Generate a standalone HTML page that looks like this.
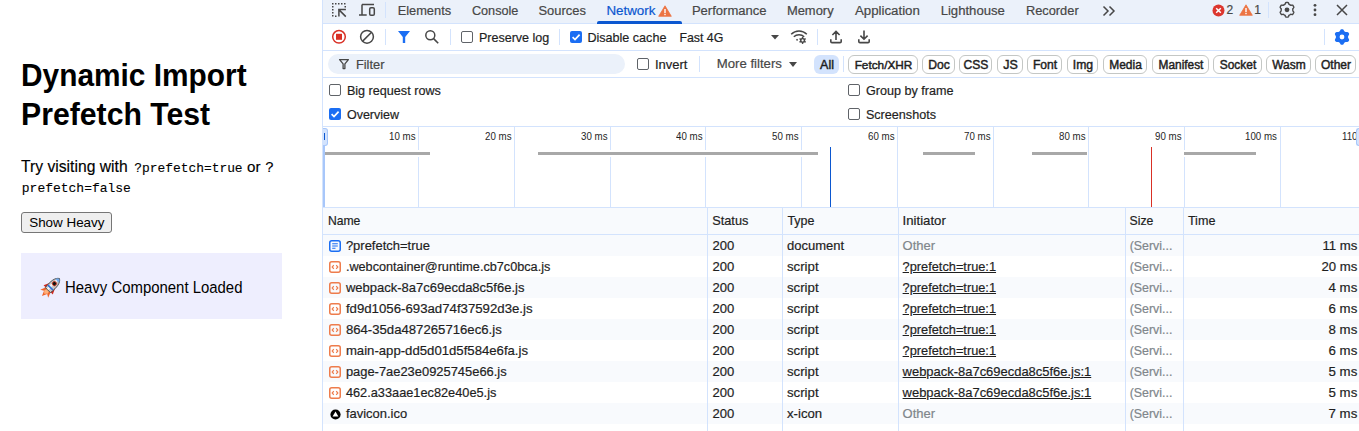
<!DOCTYPE html>
<html><head><meta charset="utf-8">
<style>
*{box-sizing:border-box;margin:0;padding:0}
html,body{width:1359px;height:431px;overflow:hidden;background:#fff;font-family:"Liberation Sans",sans-serif;color:#1f1f1f}
.a{position:absolute;white-space:nowrap}
.pt{-webkit-text-stroke:0.15px #000}
.mono{font-family:"Liberation Mono",monospace;-webkit-text-stroke:0.12px #000}
#dt{position:absolute;left:322px;top:0;width:1037px;height:431px;background:#fff;overflow:hidden}
.bar{position:absolute;left:0;width:1037px}
.sep{position:absolute;width:1px;background:#d3e3fd}
.hl{position:absolute;height:1px;background:#d3e3fd;left:0;width:1037px}
.t{position:absolute;white-space:nowrap;color:#1f1f1f;-webkit-text-stroke:0.2px currentColor}
.cb{position:absolute;width:12px;height:12px;border:1px solid #5f6368;border-radius:2px;background:#fff}
.cbc{position:absolute;width:12px;height:12px;border-radius:2px;background:#1b6ef3}
.chip{position:absolute;top:55px;height:19px;border:1px solid #c4c7c5;border-radius:6px}
.gl{position:absolute;width:1px;background:#d3e3fd}
.lbl{position:absolute;white-space:nowrap;color:#1f1f1f;line-height:12px}
.gbar{position:absolute;top:152px;height:3px;background:#a8a8a8;box-shadow:0 2px 0 #fff,0 -2px 0 #fff}
.row{position:absolute;left:1px;width:1036px;height:21px}
.odd{background:#f8fafd}
.c{position:absolute;white-space:nowrap;color:#1f1f1f;-webkit-text-stroke:0.2px currentColor}
.g{color:#80868b}
.u{text-decoration:underline}
</style></head><body>
<div id="page">
<div class="a" style="left:21.3px;top:53.82px;font-size:32.27px;line-height:42px;transform:scaleX(0.9251);transform-origin:0 0;color:#000;font-weight:bold">Dynamic Import</div>
<div class="a" style="left:21.3px;top:92.72px;font-size:32.27px;line-height:42px;transform:scaleX(0.9363);transform-origin:0 0;color:#000;font-weight:bold">Prefetch Test</div>
<div class="a pt" style="left:20.8px;top:155.66px;font-size:16.28px;line-height:21px;transform:scaleX(0.9643);transform-origin:0 0;color:#000">Try visiting with</div>
<div class="a mono" style="left:134.2px;top:160.76px;font-size:12.92px;line-height:16px;color:#000">?prefetch=true</div>
<div class="a pt" style="left:247px;top:158.94px;font-size:15.18px;line-height:16px;color:#000">or</div>
<div class="a mono" style="left:265.2px;top:160.34px;font-size:14.49px;line-height:16px;color:#000">?</div>
<div class="a mono" style="left:21.8px;top:180.84px;font-size:12.99px;line-height:16px;color:#000">prefetch=false</div>
<div class="a" style="left:21px;top:212px;width:91px;height:21px;border:1px solid #767676;border-radius:3px;background:#efefef"></div>
<div class="a" style="left:29.2px;top:214.85px;font-size:13.41px;line-height:16px;color:#000">Show Heavy</div>
<div class="a" style="left:21px;top:253px;width:261px;height:66px;background:#eeeefe"></div>
<svg class="a" style="left:40px;top:276px" width="22" height="22" viewBox="0 0 22 22"><g transform="translate(11 11) rotate(45) scale(0.8) translate(-7 -15)">
<path d="M3.2 19 L0 27 L4.2 24.5 L7 31 L9.8 24.5 L14 27 L10.8 19 Z" fill="#f0642a"/><path d="M5 19.5 L4 24 L7 27 L10 24 L9 19.5 Z" fill="#ffb07a"/>
<path d="M3.2 10.5 L-1.2 20 L3.4 20 Z" fill="#d0281e"/><path d="M10.8 10.5 L15.2 20 L10.6 20 Z" fill="#d0281e"/>
<path d="M7 0 C11.8 3 12.8 10 11.5 20.5 L2.5 20.5 C1.2 10 2.2 3 7 0 Z" fill="#c8c8c8" stroke="#3a3a3a" stroke-width="1"/><path d="M6 2 C4.5 5 4.3 12 4.8 20 L7.5 20 C7.2 12 7.2 5 7.6 1.2 Z" fill="#f2f2f2"/>
<path d="M7 0.5 C8.8 1.6 9.8 2.8 10.3 4 L3.7 4 C4.2 2.8 5.2 1.6 7 0.5 Z" fill="#6fa9ee"/>
<circle cx="7" cy="9" r="2.7" fill="#111" stroke="#e2472b" stroke-width="1.1"/>
<rect x="2.6" y="15" width="8.8" height="2" fill="#2b6fdc"/>
</g></svg>
<div class="a" style="left:64.6px;top:276.66px;font-size:16.86px;line-height:22px;transform:scaleX(0.8846);transform-origin:0 0;color:#000">Heavy Component Loaded</div>
</div>
<div id="dt">
<div class="bar" style="top:0;height:23px;background:#ebf1fa"></div>
<div class="hl" style="top:23px"></div>
<div class="hl" style="top:50px"></div>
<div class="hl" style="top:77px"></div>
<div class="hl" style="top:126px"></div>
<div class="hl" style="top:207px"></div>
<div class="hl" style="top:234px"></div>
<div class="sep" style="left:0;top:0;height:431px"></div>
<svg class="a" style="left:9px;top:2px" width="17" height="17" viewBox="0 0 17 17">
<g fill="#474747">
<rect x="1" y="1" width="1.5" height="1.5"/><rect x="4" y="1" width="1.5" height="1.5"/><rect x="7" y="1" width="1.5" height="1.5"/><rect x="10" y="1" width="1.5" height="1.5"/><rect x="13" y="1" width="1.5" height="1.5"/>
<rect x="1" y="4" width="1.5" height="1.5"/><rect x="1" y="7" width="1.5" height="1.5"/><rect x="1" y="10" width="1.5" height="1.5"/><rect x="1" y="13" width="1.5" height="1.5"/>
<rect x="4" y="13.5" width="1.5" height="1.5"/><rect x="13.5" y="4" width="1.5" height="1.5"/>
</g>
<path d="M8.3 8.1 L14.8 14.6 M7.9 6.9 V14.6 M7.1 7.6 H14.9" stroke="#474747" stroke-width="1.5" fill="none"/>
</svg>
<svg class="a" style="left:36px;top:3px" width="18" height="15" viewBox="0 0 18 15">
<path d="M4 1.5 H16 M4 1.5 V12 M1 12 H8.7" stroke="#474747" stroke-width="1.5" fill="none"/>
<rect x="11.7" y="4.8" width="4.6" height="7.4" rx="1.3" stroke="#474747" stroke-width="1.5" fill="none"/>
</svg>
<div class="sep" style="left:63px;top:2px;height:16px"></div>
<div class="t" style="left:75.65px;top:3.25px;font-size:12.83px;line-height:16px;color:#474747">Elements</div>
<div class="t" style="left:149.9px;top:3.31px;font-size:12.68px;line-height:16px;color:#474747">Console</div>
<div class="t" style="left:216.4px;top:3.21px;font-size:12.95px;line-height:16px;color:#474747">Sources</div>
<div class="t" style="left:284.4px;top:3.07px;font-size:13.36px;line-height:16px;color:#0b57d0">Network</div>
<div class="t" style="left:369.9px;top:3.17px;font-size:13.06px;line-height:16px;color:#474747">Performance</div>
<div class="t" style="left:464.9px;top:3.22px;font-size:12.94px;line-height:16px;color:#474747">Memory</div>
<div class="t" style="left:532.9px;top:3.1px;font-size:13.29px;line-height:16px;color:#474747">Application</div>
<div class="t" style="left:618.65px;top:3.15px;font-size:13.13px;line-height:16px;color:#474747">Lighthouse</div>
<div class="t" style="left:703.9px;top:3.25px;font-size:12.83px;line-height:16px;color:#474747">Recorder</div>
<svg class="a" style="left:336px;top:5px" width="14" height="12" viewBox="0 0 14 12"><path d="M7 0.8 L13.3 11.3 H0.7 Z" fill="#ec7443" stroke="#ec7443" stroke-width="0.8" stroke-linejoin="round"/><rect x="6.3" y="4" width="1.4" height="4" fill="#fff"/><rect x="6.3" y="8.8" width="1.4" height="1.4" fill="#fff"/></svg>
<div class="a" style="left:275px;top:21px;width:85px;height:3px;background:#0b57d0;border-radius:2px 2px 0 0"></div>
<svg class="a" style="left:779px;top:5px" width="16" height="12" viewBox="0 0 16 12"><path d="M2.5 1.5 L7 6 L2.5 10.5 M8.5 1.5 L13 6 L8.5 10.5" stroke="#474747" stroke-width="1.5" fill="none"/></svg>
<svg class="a" style="left:889.5px;top:4px" width="13" height="13" viewBox="0 0 13 13"><circle cx="6.5" cy="6.5" r="6" fill="#dc362e"/><path d="M4.2 4.2 L8.8 8.8 M8.8 4.2 L4.2 8.8" stroke="#fff" stroke-width="1.5"/></svg>
<div class="t" style="left:904.5px;top:1.94px;font-size:12px;line-height:16px;color:#474747">2</div>
<svg class="a" style="left:917px;top:4px" width="14" height="12" viewBox="0 0 14 12"><path d="M7 0.8 L13.3 11.3 H0.7 Z" fill="#ec7443" stroke="#ec7443" stroke-width="0.8" stroke-linejoin="round"/><rect x="6.3" y="4" width="1.4" height="4" fill="#fff"/><rect x="6.3" y="8.8" width="1.4" height="1.4" fill="#fff"/></svg>
<div class="t" style="left:932.2px;top:1.94px;font-size:12px;line-height:16px;color:#474747">1</div>
<div class="sep" style="left:946px;top:2px;height:16px"></div>
<svg class="a" style="left:956px;top:1px" width="18" height="18" viewBox="0 0 18 18"><path d="M9.00 1.50 L9.25 1.50 L9.51 1.52 L9.76 1.54 L10.02 1.57 L10.26 1.65 L10.45 1.96 L10.62 2.30 L10.76 2.65 L10.89 2.99 L11.00 3.31 L11.17 3.42 L11.36 3.50 L11.54 3.59 L11.72 3.68 L11.90 3.78 L12.07 3.88 L12.24 3.99 L12.41 4.11 L12.57 4.23 L12.75 4.33 L13.09 4.26 L13.45 4.20 L13.82 4.15 L14.19 4.12 L14.56 4.13 L14.75 4.31 L14.91 4.51 L15.05 4.72 L15.19 4.93 L15.32 5.15 L15.45 5.37 L15.56 5.60 L15.67 5.83 L15.77 6.07 L15.82 6.32 L15.65 6.64 L15.44 6.95 L15.21 7.25 L14.98 7.53 L14.75 7.79 L14.74 7.99 L14.77 8.19 L14.79 8.40 L14.80 8.60 L14.80 8.80 L14.80 9.00 L14.79 9.20 L14.77 9.41 L14.74 9.61 L14.75 9.81 L14.98 10.07 L15.21 10.35 L15.44 10.65 L15.65 10.96 L15.82 11.28 L15.77 11.53 L15.67 11.77 L15.56 12.00 L15.45 12.23 L15.32 12.45 L15.19 12.67 L15.05 12.88 L14.91 13.09 L14.75 13.29 L14.56 13.47 L14.19 13.48 L13.82 13.45 L13.45 13.40 L13.09 13.34 L12.75 13.27 L12.57 13.37 L12.41 13.49 L12.24 13.61 L12.07 13.72 L11.90 13.82 L11.72 13.92 L11.54 14.01 L11.36 14.10 L11.17 14.18 L11.00 14.29 L10.89 14.61 L10.76 14.95 L10.62 15.30 L10.45 15.64 L10.26 15.95 L10.02 16.03 L9.76 16.06 L9.51 16.08 L9.25 16.10 L9.00 16.10 L8.75 16.10 L8.49 16.08 L8.24 16.06 L7.98 16.03 L7.74 15.95 L7.55 15.64 L7.38 15.30 L7.24 14.95 L7.11 14.61 L7.00 14.29 L6.83 14.18 L6.64 14.10 L6.46 14.01 L6.28 13.92 L6.10 13.82 L5.93 13.72 L5.76 13.61 L5.59 13.49 L5.43 13.37 L5.25 13.27 L4.91 13.34 L4.55 13.40 L4.18 13.45 L3.81 13.48 L3.44 13.47 L3.25 13.29 L3.09 13.09 L2.95 12.88 L2.81 12.67 L2.68 12.45 L2.55 12.23 L2.44 12.00 L2.33 11.77 L2.23 11.53 L2.18 11.28 L2.35 10.96 L2.56 10.65 L2.79 10.35 L3.02 10.07 L3.25 9.81 L3.26 9.61 L3.23 9.41 L3.21 9.20 L3.20 9.00 L3.20 8.80 L3.20 8.60 L3.21 8.40 L3.23 8.19 L3.26 7.99 L3.25 7.79 L3.02 7.53 L2.79 7.25 L2.56 6.95 L2.35 6.64 L2.18 6.32 L2.23 6.07 L2.33 5.83 L2.44 5.60 L2.55 5.37 L2.68 5.15 L2.81 4.93 L2.95 4.72 L3.09 4.51 L3.25 4.31 L3.44 4.13 L3.81 4.12 L4.18 4.15 L4.55 4.20 L4.91 4.26 L5.25 4.33 L5.43 4.23 L5.59 4.11 L5.76 3.99 L5.93 3.88 L6.10 3.78 L6.28 3.68 L6.46 3.59 L6.64 3.50 L6.83 3.42 L7.00 3.31 L7.11 2.99 L7.24 2.65 L7.38 2.30 L7.55 1.96 L7.74 1.65 L7.98 1.57 L8.24 1.54 L8.49 1.52 L8.75 1.50 Z" stroke="#474747" stroke-width="1.4" fill="none" stroke-linejoin="round"/><circle cx="9" cy="8.8" r="2.4" fill="#474747"/></svg>
<svg class="a" style="left:990px;top:3px" width="6" height="14" viewBox="0 0 6 14"><circle cx="3" cy="2.3" r="1.4" fill="#474747"/><circle cx="3" cy="7" r="1.4" fill="#474747"/><circle cx="3" cy="11.7" r="1.4" fill="#474747"/></svg>
<svg class="a" style="left:1013px;top:3.3px" width="14" height="14" viewBox="0 0 14 14"><path d="M2 2 L12 12 M12 2 L2 12" stroke="#474747" stroke-width="1.5"/></svg>
<svg class="a" style="left:9px;top:29px" width="16" height="16" viewBox="0 0 16 16"><circle cx="8" cy="7.8" r="6.3" stroke="#d93025" stroke-width="1.5" fill="none"/><rect x="5" y="4.8" width="6" height="6" fill="#d93025"/></svg>
<svg class="a" style="left:37px;top:29px" width="16" height="16" viewBox="0 0 16 16"><circle cx="8" cy="7.8" r="6.4" stroke="#474747" stroke-width="1.5" fill="none"/><path d="M12.3 3.5 L3.7 12.1" stroke="#474747" stroke-width="1.5"/></svg>
<div class="sep" style="left:63px;top:29px;height:16px"></div>
<svg class="a" style="left:75px;top:30px" width="14" height="14" viewBox="0 0 14 14"><path d="M1 1 H13 L8.2 7 V13 H5.8 V7 Z" fill="#1b6ef3"/></svg>
<svg class="a" style="left:102px;top:29px" width="16" height="16" viewBox="0 0 16 16"><circle cx="6.3" cy="6.3" r="4.5" stroke="#474747" stroke-width="1.5" fill="none"/><path d="M9.6 9.6 L14.2 14.2" stroke="#474747" stroke-width="1.6"/></svg>
<div class="sep" style="left:128px;top:29px;height:16px"></div>
<div class="cb" style="left:139px;top:31px"></div>
<div class="t" style="left:156.9px;top:29.75px;font-size:12.56px;line-height:16px">Preserve log</div>
<div class="sep" style="left:237px;top:29px;height:16px"></div>
<div class="cbc" style="left:248px;top:31px"><svg width="12" height="12" viewBox="0 0 12 12" style="position:absolute;left:0;top:0"><path d="M2.6 6.2 L5 8.5 L9.6 3.6" stroke="#fff" stroke-width="1.7" fill="none"/></svg></div>
<div class="t" style="left:265.4px;top:29.74px;font-size:12.58px;line-height:16px">Disable cache</div>
<div class="t" style="left:357.4px;top:29.81px;font-size:12.37px;line-height:16px">Fast 4G</div>
<svg class="a" style="left:448px;top:34px" width="10" height="6" viewBox="0 0 10 6"><path d="M1 1 H9 L5 5.5 Z" fill="#474747"/></svg>
<svg class="a" style="left:468px;top:29px" width="18" height="16" viewBox="0 0 18 16"><path d="M1.2 5.2 C5.5 0.8 12.5 0.8 16.8 5.2" stroke="#474747" stroke-width="1.5" fill="none"/><path d="M3.8 7.8 C6.6 5.2 11.4 5.2 14.2 7.8" stroke="#474747" stroke-width="1.5" fill="none"/><path d="M6.5 10.3 L7.6 11.4" stroke="#474747" stroke-width="1.5"/><path fill-rule="evenodd" fill="#474747" d="M12.60 7.80 L12.91 7.81 L13.21 7.96 L13.39 8.45 L13.49 8.95 L13.66 9.13 L13.85 9.23 L14.03 9.35 L14.28 9.40 L14.76 9.24 L15.27 9.16 L15.55 9.34 L15.72 9.60 L15.86 9.88 L15.88 10.21 L15.55 10.61 L15.17 10.95 L15.09 11.18 L15.10 11.40 L15.09 11.62 L15.17 11.85 L15.55 12.19 L15.88 12.59 L15.86 12.92 L15.72 13.20 L15.55 13.46 L15.27 13.64 L14.76 13.56 L14.28 13.40 L14.03 13.45 L13.85 13.57 L13.66 13.67 L13.49 13.85 L13.39 14.35 L13.21 14.84 L12.91 14.99 L12.60 15.00 L12.29 14.99 L11.99 14.84 L11.81 14.35 L11.71 13.85 L11.54 13.67 L11.35 13.57 L11.17 13.45 L10.92 13.40 L10.44 13.56 L9.93 13.64 L9.65 13.46 L9.48 13.20 L9.34 12.92 L9.32 12.59 L9.65 12.19 L10.03 11.85 L10.11 11.62 L10.10 11.40 L10.11 11.18 L10.03 10.95 L9.65 10.61 L9.32 10.21 L9.34 9.88 L9.48 9.60 L9.65 9.34 L9.93 9.16 L10.44 9.24 L10.92 9.40 L11.17 9.35 L11.35 9.23 L11.54 9.13 L11.71 8.95 L11.81 8.45 L11.99 7.96 L12.29 7.81 Z M11.50 11.40 a1.1 1.1 0 1 1 2.2 0 a1.1 1.1 0 1 1 -2.2 0 Z"/></svg>
<div class="sep" style="left:495px;top:29px;height:16px"></div>
<svg class="a" style="left:507px;top:30px" width="14" height="14" viewBox="0 0 14 14"><path d="M7 10 V1.5 M3.4 5 L7 1.4 L10.6 5 M1.8 9.3 V11.4 Q1.8 12.6 3 12.6 H11 Q12.2 12.6 12.2 11.4 V9.3" stroke="#474747" stroke-width="1.6" fill="none"/></svg>
<svg class="a" style="left:535px;top:30px" width="14" height="14" viewBox="0 0 14 14"><path d="M7 0.5 V9 M3.4 5.6 L7 9.2 L10.6 5.6 M1.8 9.3 V11.4 Q1.8 12.6 3 12.6 H11 Q12.2 12.6 12.2 11.4 V9.3" stroke="#474747" stroke-width="1.6" fill="none"/></svg>
<div class="sep" style="left:1002px;top:29px;height:16px"></div>
<svg class="a" style="left:1011px;top:28px" width="18" height="18" viewBox="0 0 18 18"><path fill-rule="evenodd" d="M9.00 1.20 L9.27 1.20 L9.54 1.22 L9.82 1.24 L10.07 1.39 L10.30 1.61 L10.52 1.87 L10.71 2.14 L10.88 2.43 L11.04 2.71 L11.19 2.99 L11.33 3.24 L11.48 3.43 L11.67 3.52 L11.86 3.61 L12.05 3.72 L12.23 3.83 L12.41 3.94 L12.59 4.06 L12.82 4.11 L13.11 4.10 L13.42 4.09 L13.75 4.08 L14.08 4.09 L14.42 4.12 L14.75 4.18 L15.06 4.27 L15.31 4.42 L15.47 4.64 L15.61 4.87 L15.75 5.10 L15.89 5.34 L16.01 5.58 L16.13 5.83 L16.13 6.12 L16.05 6.43 L15.93 6.75 L15.79 7.05 L15.63 7.35 L15.46 7.63 L15.30 7.89 L15.15 8.14 L15.07 8.36 L15.09 8.57 L15.10 8.79 L15.10 9.00 L15.10 9.21 L15.09 9.43 L15.07 9.64 L15.15 9.86 L15.30 10.11 L15.46 10.37 L15.63 10.65 L15.79 10.95 L15.93 11.25 L16.05 11.57 L16.13 11.88 L16.13 12.17 L16.01 12.42 L15.89 12.66 L15.75 12.90 L15.61 13.13 L15.47 13.36 L15.31 13.58 L15.06 13.73 L14.75 13.82 L14.42 13.88 L14.08 13.91 L13.75 13.92 L13.42 13.91 L13.11 13.90 L12.82 13.89 L12.59 13.94 L12.41 14.06 L12.23 14.17 L12.05 14.28 L11.86 14.39 L11.67 14.48 L11.48 14.57 L11.33 14.76 L11.19 15.01 L11.04 15.29 L10.88 15.57 L10.71 15.86 L10.52 16.13 L10.30 16.39 L10.07 16.61 L9.82 16.76 L9.54 16.78 L9.27 16.80 L9.00 16.80 L8.73 16.80 L8.46 16.78 L8.18 16.76 L7.93 16.61 L7.70 16.39 L7.48 16.13 L7.29 15.86 L7.12 15.57 L6.96 15.29 L6.81 15.01 L6.67 14.76 L6.52 14.57 L6.33 14.48 L6.14 14.39 L5.95 14.28 L5.77 14.17 L5.59 14.06 L5.41 13.94 L5.18 13.89 L4.89 13.90 L4.58 13.91 L4.25 13.92 L3.92 13.91 L3.58 13.88 L3.25 13.82 L2.94 13.73 L2.69 13.58 L2.53 13.36 L2.39 13.13 L2.25 12.90 L2.11 12.66 L1.99 12.42 L1.87 12.17 L1.87 11.88 L1.95 11.57 L2.07 11.25 L2.21 10.95 L2.37 10.65 L2.54 10.37 L2.70 10.11 L2.85 9.86 L2.93 9.64 L2.91 9.43 L2.90 9.21 L2.90 9.00 L2.90 8.79 L2.91 8.57 L2.93 8.36 L2.85 8.14 L2.70 7.89 L2.54 7.63 L2.37 7.35 L2.21 7.05 L2.07 6.75 L1.95 6.43 L1.87 6.12 L1.87 5.83 L1.99 5.58 L2.11 5.34 L2.25 5.10 L2.39 4.87 L2.53 4.64 L2.69 4.42 L2.94 4.27 L3.25 4.18 L3.58 4.12 L3.92 4.09 L4.25 4.08 L4.58 4.09 L4.89 4.10 L5.18 4.11 L5.41 4.06 L5.59 3.94 L5.77 3.83 L5.95 3.72 L6.14 3.61 L6.33 3.52 L6.52 3.43 L6.67 3.24 L6.81 2.99 L6.96 2.71 L7.12 2.43 L7.29 2.14 L7.48 1.87 L7.70 1.61 L7.93 1.39 L8.18 1.24 L8.46 1.22 L8.73 1.20 Z M6.60 9.00 a2.4 2.4 0 1 1 4.8 0 a2.4 2.4 0 1 1 -4.8 0 Z" fill="#1b6ef3"/></svg>
<div class="a" style="left:6px;top:54px;width:297px;height:20px;border-radius:10px;background:#ebf1fa"></div>
<svg class="a" style="left:16px;top:58px" width="12" height="12" viewBox="0 0 12 12"><path d="M1.6 1.6 H10.4 L6.9 5.9 V10.6 H5.1 V5.9 Z" stroke="#474747" stroke-width="1.3" fill="none" stroke-linejoin="round"/></svg>
<div class="t" style="left:33.9px;top:56.55px;font-size:12.83px;line-height:16px;color:#474747">Filter</div>
<div class="cb" style="left:315px;top:58px"></div>
<div class="t" style="left:332.9px;top:56.5px;font-size:12.99px;line-height:16px">Invert</div>
<div class="sep" style="left:377px;top:56px;height:16px"></div>
<div class="t" style="left:394.7px;top:56.43px;font-size:13.2px;line-height:16px;color:#474747">More filters</div>
<svg class="a" style="left:466px;top:61px" width="10" height="7" viewBox="0 0 10 7"><path d="M1 1 H9 L5 6 Z" fill="#474747"/></svg>
<div class="a" style="left:492px;top:55px;width:25px;height:19px;border-radius:6px;background:#d3e3fd"></div>
<div class="t" style="left:498.05px;top:56.87px;font-size:12.5px;line-height:16px;color:#1f1f1f;-webkit-text-stroke:0.45px #1f1f1f">All</div>
<div class="sep" style="left:521px;top:56px;height:16px"></div>
<div class="chip" style="left:526px;width:70px"></div>
<div class="t" style="left:532.64px;top:57.11px;font-size:11.8px;line-height:16px;color:#1f1f1f;-webkit-text-stroke:0.45px #1f1f1f">Fetch/XHR</div>
<div class="chip" style="left:600px;width:33px"></div>
<div class="t" style="left:606.19px;top:56.99px;font-size:12.16px;line-height:16px;color:#1f1f1f;-webkit-text-stroke:0.45px #1f1f1f">Doc</div>
<div class="chip" style="left:637px;width:33px"></div>
<div class="t" style="left:641.57px;top:57.01px;font-size:12.09px;line-height:16px;color:#1f1f1f;-webkit-text-stroke:0.45px #1f1f1f">CSS</div>
<div class="chip" style="left:675px;width:26px"></div>
<div class="t" style="left:681.23px;top:56.88px;font-size:12.46px;line-height:16px;color:#1f1f1f;-webkit-text-stroke:0.45px #1f1f1f">JS</div>
<div class="chip" style="left:705px;width:35px"></div>
<div class="t" style="left:710.9px;top:57.01px;font-size:12.1px;line-height:16px;color:#1f1f1f;-webkit-text-stroke:0.45px #1f1f1f">Font</div>
<div class="chip" style="left:745px;width:31px"></div>
<div class="t" style="left:750.83px;top:56.97px;font-size:12.2px;line-height:16px;color:#1f1f1f;-webkit-text-stroke:0.45px #1f1f1f">Img</div>
<div class="chip" style="left:781px;width:44px"></div>
<div class="t" style="left:787.2px;top:57.05px;font-size:11.97px;line-height:16px;color:#1f1f1f;-webkit-text-stroke:0.45px #1f1f1f">Media</div>
<div class="chip" style="left:830px;width:57px"></div>
<div class="t" style="left:836.58px;top:57.09px;font-size:11.86px;line-height:16px;color:#1f1f1f;-webkit-text-stroke:0.45px #1f1f1f">Manifest</div>
<div class="chip" style="left:891px;width:49px"></div>
<div class="t" style="left:897.77px;top:57.07px;font-size:11.93px;line-height:16px;color:#1f1f1f;-webkit-text-stroke:0.45px #1f1f1f">Socket</div>
<div class="chip" style="left:944px;width:45px"></div>
<div class="t" style="left:950.28px;top:57.06px;font-size:11.96px;line-height:16px;color:#1f1f1f;-webkit-text-stroke:0.45px #1f1f1f">Wasm</div>
<div class="chip" style="left:993px;width:41px"></div>
<div class="t" style="left:998.99px;top:57.04px;font-size:12.0px;line-height:16px;color:#1f1f1f;-webkit-text-stroke:0.45px #1f1f1f">Other</div>
<div class="cb" style="left:7px;top:84px"></div>
<div class="t" style="left:24.9px;top:82.93px;font-size:12.61px;line-height:16px">Big request rows</div>
<div class="cbc" style="left:7px;top:108px"><svg width="12" height="12" viewBox="0 0 12 12" style="position:absolute;left:0;top:0"><path d="M2.6 6.2 L5 8.5 L9.6 3.6" stroke="#fff" stroke-width="1.7" fill="none"/></svg></div>
<div class="t" style="left:24.9px;top:107.05px;font-size:12.54px;line-height:16px">Overview</div>
<div class="cb" style="left:526px;top:84px"></div>
<div class="t" style="left:543.9px;top:82.93px;font-size:12.61px;line-height:16px">Group by frame</div>
<div class="cb" style="left:526px;top:108px"></div>
<div class="t" style="left:543.9px;top:107.03px;font-size:12.61px;line-height:16px">Screenshots</div>
<div class="gl" style="left:96px;top:127px;height:80px"></div>
<div class="lbl" style="left:66.87px;top:130.28px;font-size:10.17px;line-height:13px;transform:scaleX(0.9578);transform-origin:0 0">10 ms</div>
<div class="gl" style="left:192px;top:127px;height:80px"></div>
<div class="lbl" style="left:162.87px;top:130.28px;font-size:10.17px;line-height:13px;transform:scaleX(0.9578);transform-origin:0 0">20 ms</div>
<div class="gl" style="left:288px;top:127px;height:80px"></div>
<div class="lbl" style="left:258.87px;top:130.28px;font-size:10.17px;line-height:13px;transform:scaleX(0.9578);transform-origin:0 0">30 ms</div>
<div class="gl" style="left:383px;top:127px;height:80px"></div>
<div class="lbl" style="left:353.87px;top:130.28px;font-size:10.17px;line-height:13px;transform:scaleX(0.9578);transform-origin:0 0">40 ms</div>
<div class="gl" style="left:479px;top:127px;height:80px"></div>
<div class="lbl" style="left:449.87px;top:130.28px;font-size:10.17px;line-height:13px;transform:scaleX(0.9578);transform-origin:0 0">50 ms</div>
<div class="gl" style="left:575px;top:127px;height:80px"></div>
<div class="lbl" style="left:545.87px;top:130.28px;font-size:10.17px;line-height:13px;transform:scaleX(0.9578);transform-origin:0 0">60 ms</div>
<div class="gl" style="left:671px;top:127px;height:80px"></div>
<div class="lbl" style="left:641.87px;top:130.28px;font-size:10.17px;line-height:13px;transform:scaleX(0.9578);transform-origin:0 0">70 ms</div>
<div class="gl" style="left:766px;top:127px;height:80px"></div>
<div class="lbl" style="left:736.87px;top:130.28px;font-size:10.17px;line-height:13px;transform:scaleX(0.9578);transform-origin:0 0">80 ms</div>
<div class="gl" style="left:862px;top:127px;height:80px"></div>
<div class="lbl" style="left:832.87px;top:130.28px;font-size:10.17px;line-height:13px;transform:scaleX(0.9578);transform-origin:0 0">90 ms</div>
<div class="gl" style="left:958px;top:127px;height:80px"></div>
<div class="lbl" style="left:923.46px;top:130.28px;font-size:10.17px;line-height:13px;transform:scaleX(0.9578);transform-origin:0 0">100 ms</div>
<div class="lbl" style="left:1020.18px;top:130.28px;font-size:10.17px;line-height:13px;transform:scaleX(0.9578);transform-origin:0 0">110 ms</div>
<div class="gbar" style="left:2.8px;width:105.2px"></div>
<div class="gbar" style="left:215.75px;width:279.9px"></div>
<div class="gbar" style="left:600.7px;width:52.5px"></div>
<div class="gbar" style="left:710.4px;width:54.4px"></div>
<div class="gbar" style="left:862.4px;width:71.6px"></div>
<div class="a" style="left:508px;top:147px;width:1px;height:60px;background:#0b57d0"></div>
<div class="a" style="left:829px;top:147px;width:1px;height:60px;background:#d93025"></div>
<div class="a" style="left:1px;top:145px;width:2px;height:62px;background:#a8c7fa"></div>
<div class="a" style="left:0.5px;top:127.5px;width:5.5px;height:18px;border:1px solid #a8c7fa;border-left:none;border-radius:0 3px 3px 0;background:#d3e3fd"></div>
<div class="a" style="left:2px;top:133px;width:1px;height:7px;background:#0b57d0"></div>
<div class="a" style="left:1034px;top:127.5px;width:5px;height:18px;border:1px solid #a8c7fa;border-right:none;border-radius:3px 0 0 3px;background:#d3e3fd"></div>
<div class="a" style="left:1px;top:208px;width:1036px;height:26px;background:#f8fafd"></div>
<div class="hl" style="top:234px"></div>
<div class="t" style="left:5.9px;top:212.98px;font-size:12.18px;line-height:16px">Name</div>
<div class="t" style="left:390.2px;top:212.78px;font-size:12.77px;line-height:16px">Status</div>
<div class="t" style="left:465.4px;top:212.88px;font-size:12.46px;line-height:16px">Type</div>
<div class="t" style="left:580.6px;top:212.63px;font-size:13.2px;line-height:16px">Initiator</div>
<div class="t" style="left:807.6px;top:212.96px;font-size:12.23px;line-height:16px">Size</div>
<div class="t" style="left:865.9px;top:212.84px;font-size:12.59px;line-height:16px">Time</div>
<div class="row odd" style="top:235px">
<svg class="a" style="left:6px;top:5px" width="12" height="12" viewBox="0 0 12 12"><rect x="0.75" y="0.75" width="10.5" height="10.5" rx="2" stroke="#1b6ef3" stroke-width="1.5" fill="none"/><path d="M3.2 3.8 H8.8 M3.2 6 H8.8 M3.2 8.2 H6.5" stroke="#1b6ef3" stroke-width="1.1"/></svg>
<div class="c" style="left:22.9px;top:2.81px;font-size:12.97px;line-height:16px">?prefetch=true</div>
<div class="c" style="left:389.4px;top:2.77px;font-size:13.07px;line-height:16px">200</div>
<div class="c" style="left:464.0px;top:2.79px;font-size:13.03px;line-height:16px">document</div>
<div class="c g" style="left:579.6px;top:2.8px;font-size:12.99px;line-height:16px">Other</div>
<div class="c g" style="left:806.7px;top:3.01px;font-size:12.39px;line-height:16px">(Servi...</div>
<div class="c" style="left:999.39px;top:2.73px;font-size:13.18px;line-height:16px">11 ms</div>
</div>
<div class="row" style="top:256px">
<svg class="a" style="left:6px;top:5px" width="12" height="12" viewBox="0 0 12 12"><rect x="0.75" y="0.75" width="10.5" height="10.5" rx="2" stroke="#ee7c4c" stroke-width="1.5" fill="none"/><path d="M4.8 4.2 L3.2 6 L4.8 7.8 M7.2 4.2 L8.8 6 L7.2 7.8" stroke="#ee7c4c" stroke-width="1.2" fill="none"/></svg>
<div class="c" style="left:22.9px;top:2.91px;font-size:12.68px;line-height:16px">.webcontainer@runtime.cb7c0bca.js</div>
<div class="c" style="left:389.4px;top:2.77px;font-size:13.07px;line-height:16px">200</div>
<div class="c" style="left:464.0px;top:2.72px;font-size:13.22px;line-height:16px">script</div>
<div class="c u" style="left:579.6px;top:2.87px;font-size:12.79px;line-height:16px">?prefetch=true:1</div>
<div class="c g" style="left:806.7px;top:3.01px;font-size:12.39px;line-height:16px">(Servi...</div>
<div class="c" style="left:998.44px;top:2.74px;font-size:13.17px;line-height:16px">20 ms</div>
</div>
<div class="row odd" style="top:277px">
<svg class="a" style="left:6px;top:5px" width="12" height="12" viewBox="0 0 12 12"><rect x="0.75" y="0.75" width="10.5" height="10.5" rx="2" stroke="#ee7c4c" stroke-width="1.5" fill="none"/><path d="M4.8 4.2 L3.2 6 L4.8 7.8 M7.2 4.2 L8.8 6 L7.2 7.8" stroke="#ee7c4c" stroke-width="1.2" fill="none"/></svg>
<div class="c" style="left:22.9px;top:2.8px;font-size:13.0px;line-height:16px">webpack-8a7c69ecda8c5f6e.js</div>
<div class="c" style="left:389.4px;top:2.77px;font-size:13.07px;line-height:16px">200</div>
<div class="c" style="left:464.0px;top:2.72px;font-size:13.22px;line-height:16px">script</div>
<div class="c u" style="left:579.6px;top:2.87px;font-size:12.79px;line-height:16px">?prefetch=true:1</div>
<div class="c g" style="left:806.7px;top:3.01px;font-size:12.39px;line-height:16px">(Servi...</div>
<div class="c" style="left:1005.56px;top:2.71px;font-size:13.26px;line-height:16px">4 ms</div>
</div>
<div class="row" style="top:298px">
<svg class="a" style="left:6px;top:5px" width="12" height="12" viewBox="0 0 12 12"><rect x="0.75" y="0.75" width="10.5" height="10.5" rx="2" stroke="#ee7c4c" stroke-width="1.5" fill="none"/><path d="M4.8 4.2 L3.2 6 L4.8 7.8 M7.2 4.2 L8.8 6 L7.2 7.8" stroke="#ee7c4c" stroke-width="1.2" fill="none"/></svg>
<div class="c" style="left:22.9px;top:2.72px;font-size:13.23px;line-height:16px">fd9d1056-693ad74f37592d3e.js</div>
<div class="c" style="left:389.4px;top:2.77px;font-size:13.07px;line-height:16px">200</div>
<div class="c" style="left:464.0px;top:2.72px;font-size:13.22px;line-height:16px">script</div>
<div class="c u" style="left:579.6px;top:2.87px;font-size:12.79px;line-height:16px">?prefetch=true:1</div>
<div class="c g" style="left:806.7px;top:3.01px;font-size:12.39px;line-height:16px">(Servi...</div>
<div class="c" style="left:1005.56px;top:2.71px;font-size:13.26px;line-height:16px">6 ms</div>
</div>
<div class="row odd" style="top:319px">
<svg class="a" style="left:6px;top:5px" width="12" height="12" viewBox="0 0 12 12"><rect x="0.75" y="0.75" width="10.5" height="10.5" rx="2" stroke="#ee7c4c" stroke-width="1.5" fill="none"/><path d="M4.8 4.2 L3.2 6 L4.8 7.8 M7.2 4.2 L8.8 6 L7.2 7.8" stroke="#ee7c4c" stroke-width="1.2" fill="none"/></svg>
<div class="c" style="left:22.9px;top:2.74px;font-size:13.17px;line-height:16px">864-35da487265716ec6.js</div>
<div class="c" style="left:389.4px;top:2.77px;font-size:13.07px;line-height:16px">200</div>
<div class="c" style="left:464.0px;top:2.72px;font-size:13.22px;line-height:16px">script</div>
<div class="c u" style="left:579.6px;top:2.87px;font-size:12.79px;line-height:16px">?prefetch=true:1</div>
<div class="c g" style="left:806.7px;top:3.01px;font-size:12.39px;line-height:16px">(Servi...</div>
<div class="c" style="left:1005.56px;top:2.71px;font-size:13.26px;line-height:16px">8 ms</div>
</div>
<div class="row" style="top:340px">
<svg class="a" style="left:6px;top:5px" width="12" height="12" viewBox="0 0 12 12"><rect x="0.75" y="0.75" width="10.5" height="10.5" rx="2" stroke="#ee7c4c" stroke-width="1.5" fill="none"/><path d="M4.8 4.2 L3.2 6 L4.8 7.8 M7.2 4.2 L8.8 6 L7.2 7.8" stroke="#ee7c4c" stroke-width="1.2" fill="none"/></svg>
<div class="c" style="left:22.9px;top:2.74px;font-size:13.16px;line-height:16px">main-app-dd5d01d5f584e6fa.js</div>
<div class="c" style="left:389.4px;top:2.77px;font-size:13.07px;line-height:16px">200</div>
<div class="c" style="left:464.0px;top:2.72px;font-size:13.22px;line-height:16px">script</div>
<div class="c u" style="left:579.6px;top:2.87px;font-size:12.79px;line-height:16px">?prefetch=true:1</div>
<div class="c g" style="left:806.7px;top:3.01px;font-size:12.39px;line-height:16px">(Servi...</div>
<div class="c" style="left:1005.56px;top:2.71px;font-size:13.26px;line-height:16px">6 ms</div>
</div>
<div class="row odd" style="top:361px">
<svg class="a" style="left:6px;top:5px" width="12" height="12" viewBox="0 0 12 12"><rect x="0.75" y="0.75" width="10.5" height="10.5" rx="2" stroke="#ee7c4c" stroke-width="1.5" fill="none"/><path d="M4.8 4.2 L3.2 6 L4.8 7.8 M7.2 4.2 L8.8 6 L7.2 7.8" stroke="#ee7c4c" stroke-width="1.2" fill="none"/></svg>
<div class="c" style="left:22.9px;top:2.82px;font-size:12.92px;line-height:16px">page-7ae23e0925745e66.js</div>
<div class="c" style="left:389.4px;top:2.77px;font-size:13.07px;line-height:16px">200</div>
<div class="c" style="left:464.0px;top:2.72px;font-size:13.22px;line-height:16px">script</div>
<div class="c u" style="left:579.6px;top:2.81px;font-size:12.96px;line-height:16px">webpack-8a7c69ecda8c5f6e.js:1</div>
<div class="c g" style="left:806.7px;top:3.01px;font-size:12.39px;line-height:16px">(Servi...</div>
<div class="c" style="left:1005.56px;top:2.71px;font-size:13.26px;line-height:16px">5 ms</div>
</div>
<div class="row" style="top:382px">
<svg class="a" style="left:6px;top:5px" width="12" height="12" viewBox="0 0 12 12"><rect x="0.75" y="0.75" width="10.5" height="10.5" rx="2" stroke="#ee7c4c" stroke-width="1.5" fill="none"/><path d="M4.8 4.2 L3.2 6 L4.8 7.8 M7.2 4.2 L8.8 6 L7.2 7.8" stroke="#ee7c4c" stroke-width="1.2" fill="none"/></svg>
<div class="c" style="left:22.9px;top:2.88px;font-size:12.77px;line-height:16px">462.a33aae1ec82e40e5.js</div>
<div class="c" style="left:389.4px;top:2.77px;font-size:13.07px;line-height:16px">200</div>
<div class="c" style="left:464.0px;top:2.72px;font-size:13.22px;line-height:16px">script</div>
<div class="c u" style="left:579.6px;top:2.81px;font-size:12.96px;line-height:16px">webpack-8a7c69ecda8c5f6e.js:1</div>
<div class="c g" style="left:806.7px;top:3.01px;font-size:12.39px;line-height:16px">(Servi...</div>
<div class="c" style="left:1005.56px;top:2.71px;font-size:13.26px;line-height:16px">5 ms</div>
</div>
<div class="row odd" style="top:403px">
<svg class="a" style="left:6.5px;top:5.5px" width="11" height="11" viewBox="0 0 11 11"><circle cx="5.5" cy="5.5" r="5.1" fill="#000"/><path d="M5.5 2.6 L8.4 7.6 H2.6 Z" fill="#fff"/></svg>
<div class="c" style="left:22.9px;top:2.8px;font-size:12.98px;line-height:16px">favicon.ico</div>
<div class="c" style="left:389.4px;top:2.77px;font-size:13.07px;line-height:16px">200</div>
<div class="c" style="left:464.0px;top:2.74px;font-size:13.17px;line-height:16px">x-icon</div>
<div class="c g" style="left:579.6px;top:2.8px;font-size:12.99px;line-height:16px">Other</div>
<div class="c g" style="left:806.7px;top:3.01px;font-size:12.39px;line-height:16px">(Servi...</div>
<div class="c" style="left:1005.56px;top:2.71px;font-size:13.26px;line-height:16px">7 ms</div>
</div>
<div class="sep" style="left:385px;top:208px;height:223px"></div>
<div class="sep" style="left:460px;top:208px;height:223px"></div>
<div class="sep" style="left:576px;top:208px;height:223px"></div>
<div class="sep" style="left:803px;top:208px;height:223px"></div>
<div class="sep" style="left:861px;top:208px;height:223px"></div>
</div>
</body></html>
